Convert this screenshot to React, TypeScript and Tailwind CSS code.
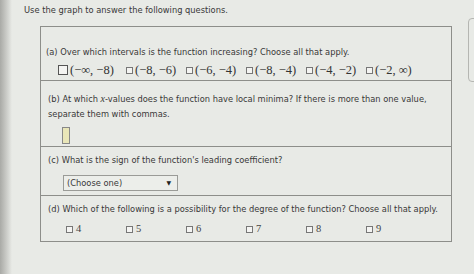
import React from "react";

const intervals = ["(−∞, −8)", "(−8, −6)", "(−6, −4)", "(−8, −4)", "(−4, −2)", "(−2, ∞)"];
const degrees = ["4", "5", "6", "7", "8", "9"];

function Box({ big = false }: { big?: boolean }) {
  return big ? (
    <span className="inline-block w-[10px] h-[10px] border-[1.5px] border-[#555] bg-[#f4f4f2] shrink-0" />
  ) : (
    <span className="inline-block w-[7px] h-[7px] border border-[#777] bg-[#f4f4f2] shrink-0" />
  );
}

export default function App() {
  return (
    <div className="w-[474px] h-[274px] bg-[#e8eae6] relative overflow-hidden text-[#383838] font-['DejaVu_Sans',sans-serif]">
      {/* screen bezel at left */}
      <div className="absolute left-0 top-0 bottom-0 w-[12px] bg-gradient-to-r from-[#a9aaa6] via-[#c8c9c5] to-transparent" />
      {/* neighbouring panel edge at right */}
      <div className="absolute left-[468px] top-[18px] w-[20px] h-[64px] rounded-[4px] border border-[#b5b6b2]" />

      <div className="relative pl-[24px] pt-[5px] text-[8.3px] leading-[10px]">
        Use the graph to answer the following questions.
      </div>

      <div className="relative ml-[40px] mt-[11px] w-[412px] border border-[#8d8e8a] text-[8.3px] leading-[10px]">
        {/* (a) */}
        <div className="px-[5px] pt-[20px] pb-[3px] border-b border-[#8d8e8a]">
          <div>(a) Over which intervals is the function increasing? Choose all that apply.</div>
          <div className="flex items-center mt-[6px] ml-[12px] h-[14px] font-['Liberation_Serif',serif] text-[12.5px] text-[#333]">
            {intervals.map((t, i) => (
              <div key={t} className={`flex items-center gap-[2px] ${i === 0 ? "w-[68px]" : "w-[60px]"}`}>
                <Box big={i === 0} />
                <span className="whitespace-nowrap">{t}</span>
              </div>
            ))}
          </div>
        </div>

        {/* (b) */}
        <div className="px-[7px] pt-[10px] pb-[2px] border-b border-[#8d8e8a]">
          <div className="leading-[15px] whitespace-nowrap">
            (b) At which <span className="font-['Liberation_Serif',serif] italic text-[10px]">x</span>-values does the
            function have local minima? If there is more than one value,
            <br />
            separate them with commas.
          </div>
          <div className="mt-[5px] ml-[14px] w-[8px] h-[17px] border border-[#888] bg-[#e9e6b8]" />
        </div>

        {/* (c) */}
        <div className="px-[7px] pt-[8px] pb-[4px] border-b border-[#8d8e8a]">
          <div>(c) What is the sign of the function's leading coefficient?</div>
          <div className="mt-[10px] ml-[15px] w-[115px] h-[16px] border border-[#9a9b97] bg-[#eceeea] flex items-center justify-between pl-[3px] pr-[6px]">
            <span>(Choose one)</span>
            <span className="text-[6px] text-[#222]">▼</span>
          </div>
        </div>

        {/* (d) */}
        <div className="px-[7px] pt-[8px] pb-[6px]">
          <div className="whitespace-nowrap">(d) Which of the following is a possibility for the degree of the function? Choose all that apply.</div>
          <div className="flex items-center mt-[9px] ml-[18px] h-[12px] font-['Liberation_Serif',serif] text-[10.5px] text-[#444]">
            {degrees.map((d) => (
              <div key={d} className="flex items-center gap-[3px] w-[60px]">
                <Box />
                <span>{d}</span>
              </div>
            ))}
          </div>
        </div>
      </div>
    </div>
  );
}
